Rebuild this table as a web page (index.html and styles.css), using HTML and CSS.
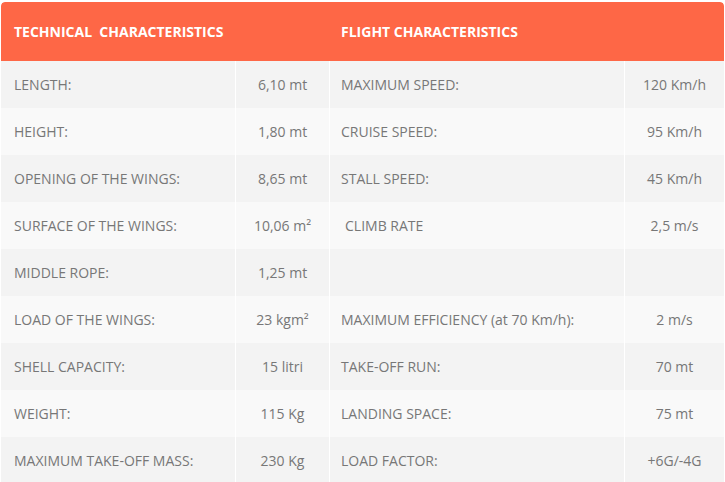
FILE: index.html
```html
<!DOCTYPE html>
<html lang="en">
<head>
<meta charset="utf-8">
<title>Characteristics</title>
<link rel="stylesheet" href="styles.css">
</head>
<body>
<table class="specs">
  <colgroup>
    <col class="c1"><col class="c2"><col class="c3"><col class="c4">
  </colgroup>
  <thead>
    <tr>
      <th colspan="2">TECHNICAL&nbsp; CHARACTERISTICS</th>
      <th colspan="2" class="second">FLIGHT CHARACTERISTICS</th>
    </tr>
  </thead>
  <tbody>
    <tr><td>LENGTH:</td><td class="v">6,10 mt</td><td>MAXIMUM SPEED:</td><td class="v">120 Km/h</td></tr>
    <tr><td>HEIGHT:</td><td class="v">1,80 mt</td><td>CRUISE SPEED:</td><td class="v">95 Km/h</td></tr>
    <tr><td>OPENING OF THE WINGS:</td><td class="v">8,65 mt</td><td>STALL SPEED:</td><td class="v">45 Km/h</td></tr>
    <tr><td>SURFACE OF THE WINGS:</td><td class="v">10,06 m²</td><td class="ind">CLIMB RATE</td><td class="v">2,5 m/s</td></tr>
    <tr><td>MIDDLE ROPE:</td><td class="v">1,25 mt</td><td></td><td class="v"></td></tr>
    <tr><td>LOAD OF THE WINGS:</td><td class="v">23 kgm²</td><td>MAXIMUM EFFICIENCY (at 70 Km/h):</td><td class="v">2 m/s</td></tr>
    <tr><td>SHELL CAPACITY:</td><td class="v">15 litri</td><td>TAKE-OFF RUN:</td><td class="v">70 mt</td></tr>
    <tr><td>WEIGHT:</td><td class="v">115 Kg</td><td>LANDING SPACE:</td><td class="v">75 mt</td></tr>
    <tr><td>MAXIMUM TAKE-OFF MASS:</td><td class="v">230 Kg</td><td>LOAD FACTOR:</td><td class="v">+6G/-4G</td></tr>
  </tbody>
</table>
</body>
</html>
```
FILE: styles.css
```css
html, body {
  margin: 0;
  padding: 0;
  background: #fff;
}
body {
  padding: 2px 0 0 1px;
  font-family: "Open Sans", "Liberation Sans", sans-serif;
  font-size: 14px;
  color: #777;
}
.specs {
  width: 723px;
  border-collapse: separate;
  border-spacing: 0;
  table-layout: fixed;
  border-radius: 4px 4px 0 0;
  overflow: hidden;
}
.c1 { width: 235px; }
.c2 { width: 94px; }
.c3 { width: 295px; }
.c4 { width: 99px; }
.specs th {
  background: #fe6746;
  color: #fff;
  font-weight: 700;
  text-align: left;
  height: 59px;
  padding: 0 12px 0 13px;
  box-sizing: border-box;
  font-size: 14px;
}
.specs th.second { padding-left: 11px; }
.specs th:first-child { border-top-left-radius: 4px; }
.specs th:last-child { border-top-right-radius: 4px; }
.specs td {
  height: 47px;
  padding: 0 12px 0 13px;
  box-sizing: border-box;
  background: #f3f3f3;
  border-right: 1px solid #fff;
  white-space: nowrap;
}
.specs td:last-child { border-right: 0; }
.specs tbody tr:nth-child(even) td { background: #f9f9f9; }
.specs td:nth-child(3) { padding-left: 11px; }
.specs td.v {
  text-align: center;
  padding: 0 4px;
}
.specs td.ind { padding-left: 15px; }
```
